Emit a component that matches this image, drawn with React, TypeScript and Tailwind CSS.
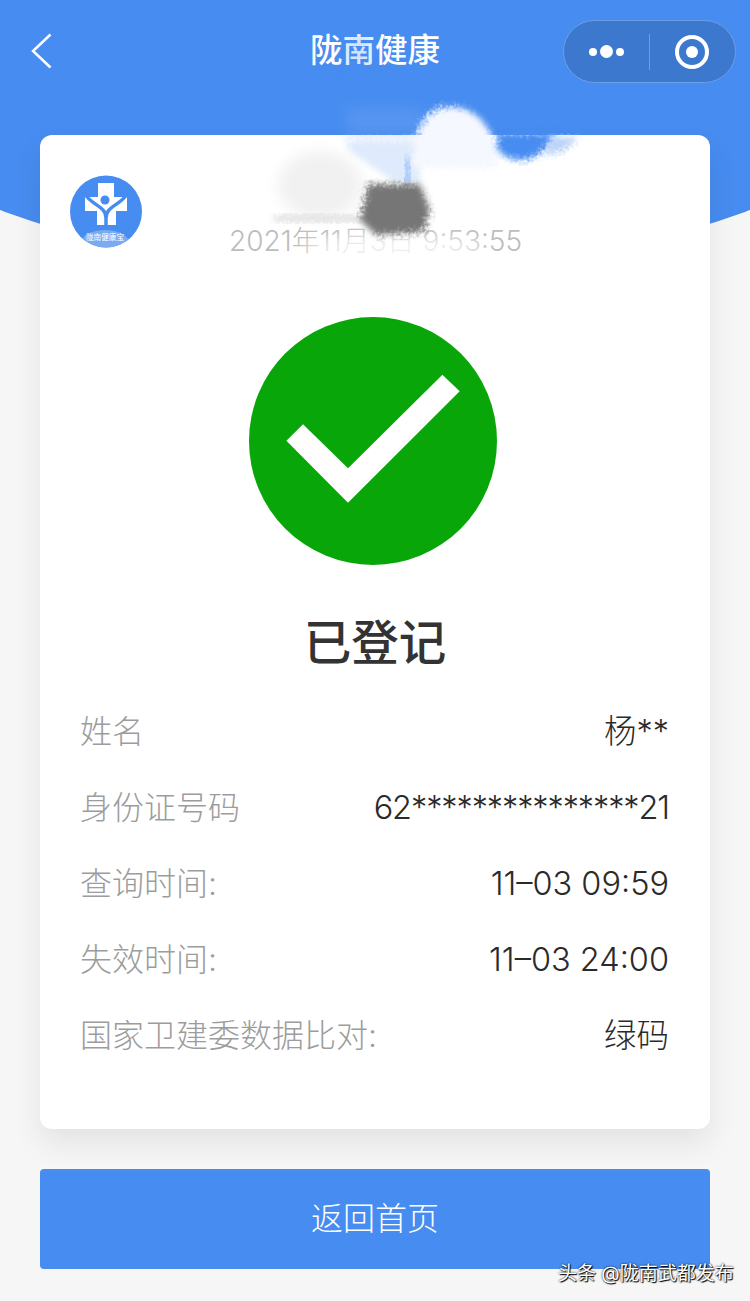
const fontStack = "font-['Inter','Noto_Sans_CJK_SC',sans-serif]";

const rows = [
  { label: "姓名", value: "杨**" },
  { label: "身份证号码", value: "62***************21", tight: true },
  { label: "查询时间:", value: "11–03 09:59" },
  { label: "失效时间:", value: "11–03 24:00" },
  { label: "国家卫建委数据比对:", value: "绿码" },
];

function Logo() {
  return (
    <svg viewBox="0 0 72 73" className="h-[73px] w-[72px] shrink-0">
      <defs>
        <clipPath id="logo-clip">
          <circle cx="36" cy="36.500" r="36" />
        </clipPath>
      </defs>
      <circle cx="36" cy="36.500" r="36" fill="#478cf0" />
      <polygon points="28,8 44,8 44,22 57,22 57,36 46,36 46,50 27,50 27,36 15,36 15,22 28,22" fill="#fff" />
      <g fill="none" stroke="#478cf0" strokeWidth="3.500">
        <path d="M15 19C21 30 36 31 36 43V52M57 19C51 30 36 31 36 43" />
      </g>
      <circle cx="35" cy="25" r="4.500" fill="#478cf0" />
      <g clipPath="url(#logo-clip)">
        <ellipse cx="35" cy="68" rx="24" ry="13" fill="#7ba9f2" />
      </g>
      <text x="35" y="65" textAnchor="middle" fontSize="7.600" fill="#fff" fontFamily="'Noto Sans CJK SC', sans-serif">
        陇南健康宝
      </text>
    </svg>
  );
}

// the scribbled-out part of the photo around the date
function Smudges() {
  return (
    <svg viewBox="0 0 750 300" className="pointer-events-none absolute left-0 top-0 h-[300px] w-[750px]">
      <defs>
        <filter id="rough" x="-20%" y="-20%" width="140%" height="140%">
          <feTurbulence type="fractalNoise" baseFrequency="0.3" numOctaves="2" seed="4" result="n" />
          <feGaussianBlur in="SourceGraphic" stdDeviation="3" result="b" />
          <feDisplacementMap in="b" in2="n" scale="8" />
        </filter>
        <filter id="soft" x="-30%" y="-30%" width="160%" height="160%">
          <feGaussianBlur stdDeviation="7" />
        </filter>
      </defs>
      <ellipse cx="395" cy="248" rx="92" ry="13" fill="#fff" opacity="0.8" filter="url(#soft)" />
      <rect x="347" y="108" width="75" height="26" fill="#6fa5f2" opacity="0.4" filter="url(#soft)" />
      <path d="M345 140H420V182H395L350 152Z" fill="#dfeafc" filter="url(#rough)" />
      <path d="M405 158H410V184H405Z" fill="#8ab6f2" filter="url(#rough)" />
      <path d="M413 160C415 122 430 106 450 107C474 106 490 124 497 150L497 168H413Z" fill="#f5f8fe" filter="url(#rough)" />
      <path d="M497 133H556C548 150 535 159 522 160C510 160 500 155 497 148Z" fill="#478cf0" filter="url(#rough)" />
      <path d="M550 137H578C570 148 560 154 546 156Z" fill="#bcd4f8" filter="url(#rough)" />
      <ellipse cx="320" cy="185" rx="42" ry="34" fill="#f1f1f1" filter="url(#soft)" />
      <rect x="274" y="215" width="90" height="7" rx="3" fill="#e0e0e0" filter="url(#rough)" />
      <path d="M368 184H420L430 210L424 232L376 235L360 220Z" fill="#767676" filter="url(#rough)" />
      <rect x="343" y="33" width="30" height="36" fill="#478cf0" opacity="0.25" filter="url(#soft)" />
    </svg>
  );
}

export default function App() {
  return (
    <div className={`relative h-[1301px] w-[750px] overflow-hidden bg-[#f6f6f6] ${fontStack}`}>
      <div className="absolute left-[-725px] top-[-1924px] h-[2200px] w-[2200px] rounded-full bg-[#478cf0]" />

      <div className="relative">
        <header className="grid h-[135px] grid-cols-[1fr_auto_1fr] items-start pl-[31px] pr-[14px] pt-5">
          <svg viewBox="0 0 22 36" className="mt-[13px] h-9 w-[22px]" fill="none" stroke="#fff" strokeWidth="2.500">
            <path d="M19.500 1.500L2 18l17.500 16.500" />
          </svg>
          <h1 className="ml-[-17px] mt-[10px] text-[32.500px] font-medium leading-[42px] text-white">陇南健康</h1>
          <div className="flex h-[63px] w-[173px] items-center justify-self-end rounded-full border border-[#6c9fe6] bg-[#3d78cf] pl-[25px]">
            <div className="flex items-center gap-[3px]">
              <span className="h-[8px] w-[8px] rounded-full bg-white" />
              <span className="h-[13px] w-[13px] rounded-full bg-white" />
              <span className="h-[8px] w-[8px] rounded-full bg-white" />
            </div>
            <div className="ml-[25px] h-9 w-px bg-[#6c9fe6]" />
            <div className="ml-[25px] flex h-[34px] w-[34px] items-center justify-center rounded-full border-[4px] border-white">
              <span className="h-3 w-3 rounded-full bg-white" />
            </div>
          </div>
        </header>

        <main className="px-10">
          <section className="rounded-xl bg-white pb-[55px] pt-10 shadow-[0_15px_30px_rgba(0,0,0,0.08)]">
            <div className="flex items-start pl-[30px]">
              <Logo />
              <p className="ml-[87px] mt-[50px] whitespace-nowrap text-[28px] font-light leading-8 text-[#bdbdbd]">
                2021年11月3日 9:53:55
              </p>
            </div>

            <div className="ml-[209px] mt-[60px] flex h-[248px] w-[248px] items-center justify-center rounded-full bg-[#09a60a]">
              <svg viewBox="0 0 248 248" className="h-[248px] w-[248px]">
                <path d="M37.400 123.700L54 107.300L99 151.300L193.400 57.700L210.700 74.300L99 185.700z" fill="#fff" />
              </svg>
            </div>

            <h2 className="mt-12 text-center text-[47.500px] font-medium leading-[60px] text-[#333]">已登记</h2>

            <div className="mt-[21px] flex flex-col pl-10 pr-[41px]">
              {rows.map((row) => (
                <div key={row.label} className="flex h-[76px] items-center justify-between text-[32px] font-light">
                  <span className="text-[#9c9c9c]">{row.label}</span>
                  <span className={row.tight ? "text-[32.500px] tracking-[-1.100px] text-[#2a2a2a]" : "text-[32.500px] text-[#2a2a2a]"}>
                    {row.value}
                  </span>
                </div>
              ))}
            </div>
          </section>

          <button className="mt-10 flex h-[100px] w-full items-center justify-center rounded bg-[#478cf0] text-[32px] font-light text-white">
            返回首页
          </button>
        </main>
      </div>

      <Smudges />

      <p className="absolute left-[558px] top-[1258px] whitespace-nowrap text-[19px] leading-8 text-white [text-shadow:0_0_2px_#000,1px_1px_1px_#000]">
        头条 @陇南武都发布
      </p>
    </div>
  );
}
